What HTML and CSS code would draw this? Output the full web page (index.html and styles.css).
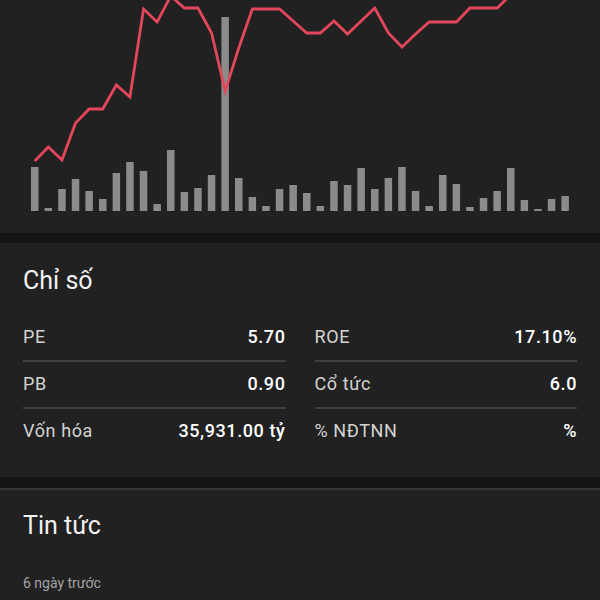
FILE: index.html
```html
<!DOCTYPE html>
<html lang="vi">

<head>
  <meta charset="UTF-8" />
  <meta name="viewport" content="width=device-width, initial-scale=1.0" />
  <title>Chỉ số</title>
  <link rel="stylesheet" href="styles.css">
</head>

<body>
  <section class="chart">
    <svg id="chart" width="600" height="233" viewBox="0 0 600 233"></svg>
  </section>

  <section class="card">
    <h2 class="card-title">Chỉ số</h2>
    <div class="stats">
      <div class="stat"><span class="label">PE</span><span class="value">5.70</span></div>
      <div class="stat"><span class="label">ROE</span><span class="value">17.10%</span></div>
      <div class="stat"><span class="label">PB</span><span class="value">0.90</span></div>
      <div class="stat"><span class="label">Cổ tức</span><span class="value">6.0</span></div>
      <div class="stat"><span class="label">Vốn hóa</span><span class="value">35,931.00 tỷ</span></div>
      <div class="stat"><span class="label">% NĐTNN</span><span class="value">%</span></div>
    </div>
  </section>

  <section class="card news">
    <h2 class="card-title">Tin tức</h2>
    <div class="news-time">6 ngày trước</div>
  </section>

  <script>
    const volumes = [44, 3, 22, 32, 20, 12, 38, 49, 40, 7, 61, 19, 23, 36, 194, 33, 14, 5, 22, 26,
      18, 5, 30, 26, 43, 22, 33, 44, 20, 5, 36, 27, 4, 13, 20, 43, 11, 2, 12, 15];
    const prices = [161, 147, 160, 123, 109, 109, 85, 97, 9, 22, -4, 8, 8, 33, 91, 48, 9, 9, 9, 21,
      33, 33, 21, 34, 21, 8, 33, 47, 34, 22, 22, 22, 8, 8, 8, -5, -15, -20, -25, -30];

    const svg = document.getElementById('chart');
    const ns = 'http://www.w3.org/2000/svg';
    const baseline = 211;
    const step = 13.6;
    const barWidth = 7.5;

    volumes.forEach((h, i) => {
      const rect = document.createElementNS(ns, 'rect');
      rect.setAttribute('x', 31 + step * i);
      rect.setAttribute('y', baseline - h);
      rect.setAttribute('width', barWidth);
      rect.setAttribute('height', h);
      rect.setAttribute('class', 'bar');
      svg.appendChild(rect);
    });

    const line = document.createElementNS(ns, 'polyline');
    line.setAttribute('points', prices.map((y, i) => (31 + step * i + barWidth / 2) + ',' + y).join(' '));
    line.setAttribute('class', 'price');
    svg.appendChild(line);
  </script>
</body>

</html>
```

FILE: styles.css
```css
body {
  margin: 0;
  font-family: Roboto, "Noto Sans", sans-serif;
  background: #141414;
  color: #fff;
}

.chart {
  background: #212121;
  height: 233px;
  margin-bottom: 10px;
}

.chart svg {
  display: block;
}

.bar {
  fill: #8b8b8b;
}

.price {
  fill: none;
  stroke: #e4465c;
  stroke-width: 2.8;
  stroke-linejoin: miter;
}

.card {
  background: #212121;
  padding: 23px 23px 23px;
  margin-bottom: 11px;
}

.card-title {
  margin: 0 0 19px;
  font-size: 25px;
  line-height: 30px;
  font-weight: 400;
  color: #f2f2f2;
}

.stats {
  display: grid;
  grid-template-columns: 1fr 1fr;
  column-gap: 29px;
}

.stat {
  display: flex;
  justify-content: space-between;
  align-items: center;
  padding: 12px 0 13px;
  font-size: 18px;
  line-height: 20px;
  letter-spacing: 0.6px;
  border-bottom: 2px solid #3e3e3e;
}

.stat:nth-last-child(-n+2) {
  border-bottom: none;
}

.label {
  color: #d4d4d4;
}

.value {
  color: #fff;
  font-weight: 500;
}

.news {
  border-top: 2px solid #363636;
  padding-top: 21px;
  margin-bottom: 0;
  min-height: 200px;
}

.news .card-title {
  margin-bottom: 32px;
}

.news-time {
  font-size: 14px;
  line-height: 20px;
  color: #a3a3a3;
}
```
